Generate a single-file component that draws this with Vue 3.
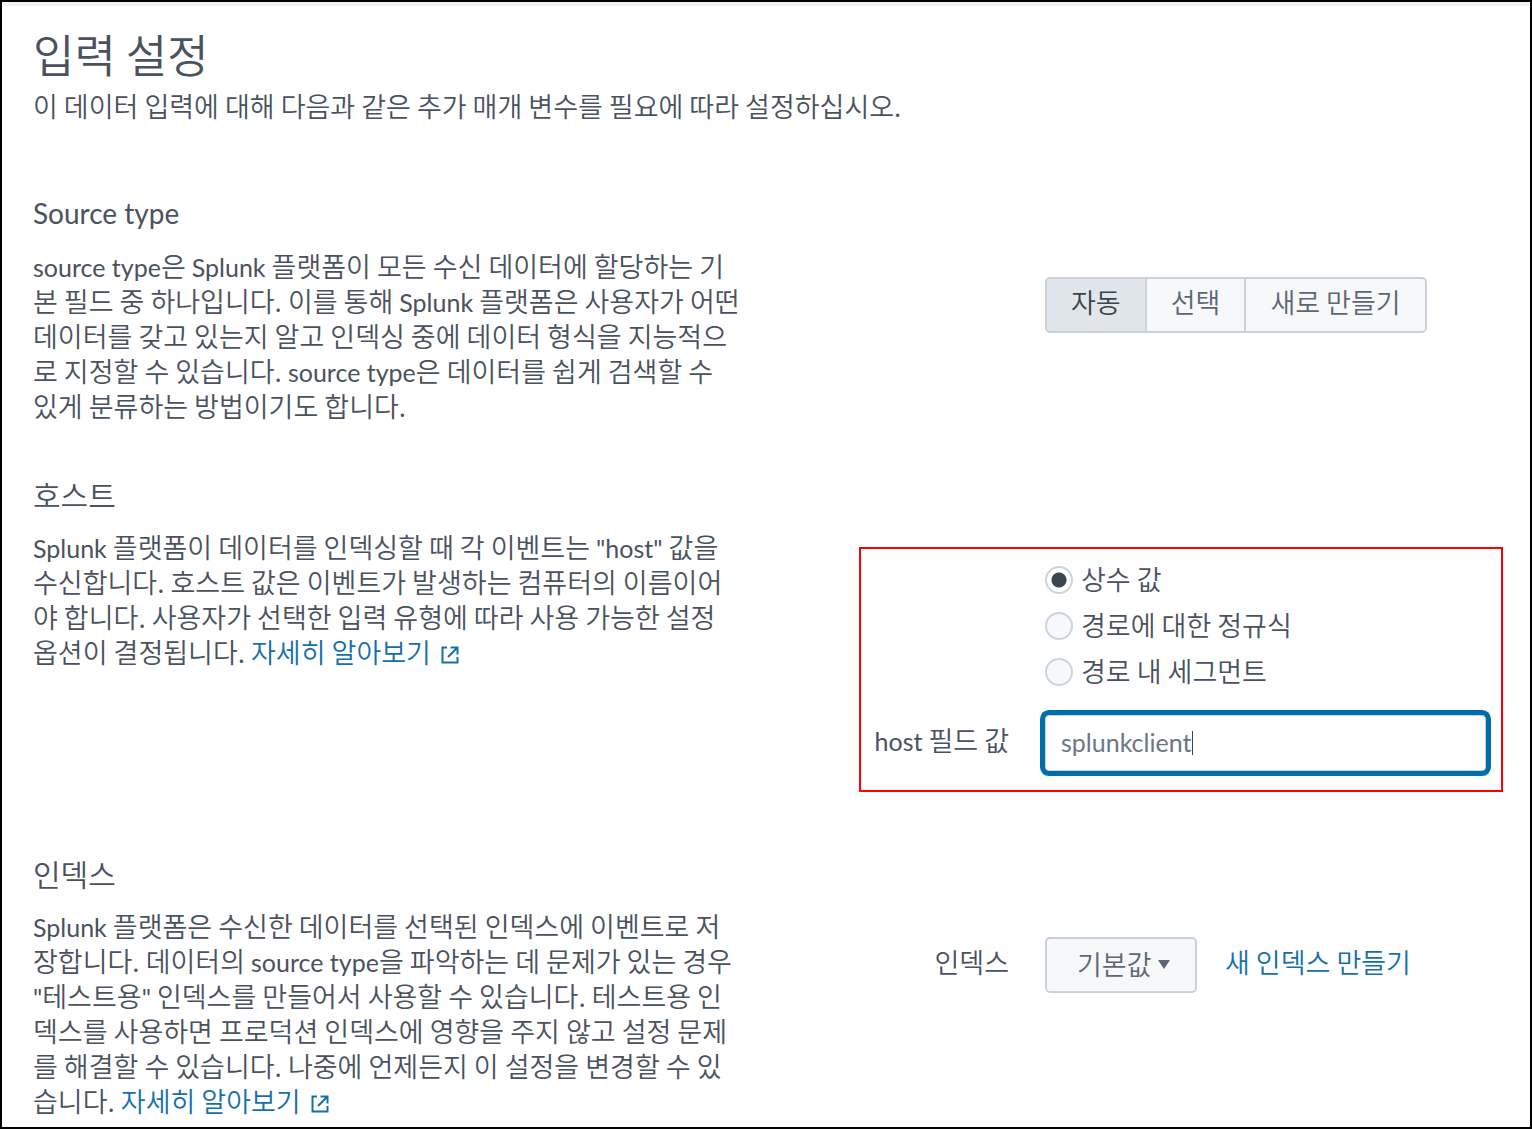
<template>
    <main class="page">
        <header class="page-header">
            <h1>입력 설정</h1>
            <p>이 데이터 입력에 대해 다음과 같은 추가 매개 변수를 필요에 따라 설정하십시오.</p>
        </header>

        <section class="setting">
            <h2 lang="en">Source type</h2>
            <p class="description">
                <span lang="en">source type</span>은 <span lang="en">Splunk</span> 플랫폼이 모든 수신 데이터에 할당하는 기<br />본 필드 중 하나입니다. 이를 통해 <span lang="en">Splunk</span> 플랫폼은 사용자가 어떤<br />데이터를 갖고 있는지 알고 인덱싱 중에 데이터 형식을 지능적으<br />로 지정할 수 있습니다. <span lang="en">source type</span>은 데이터를 쉽게 검색할 수<br />있게 분류하는 방법이기도 합니다.
            </p>
            <div class="controls">
                <div class="field">
                    <div class="button-group">
                        <button
                            v-for="mode in modes"
                            :key="mode"
                            type="button"
                            :class="{ active: mode === selectedMode }"
                            @click="selectedMode = mode"
                        >{{ mode }}</button>
                    </div>
                </div>
            </div>
        </section>

        <section class="setting">
            <h2>호스트</h2>
            <p class="description">
                <span lang="en">Splunk</span> 플랫폼이 데이터를 인덱싱할 때 각 이벤트는 <span lang="en">"host"</span> 값을<br />수신합니다. 호스트 값은 이벤트가 발생하는 컴퓨터의 이름이어<br />야 합니다. 사용자가 선택한 입력 유형에 따라 사용 가능한 설정<br />옵션이 결정됩니다. <a href="#">자세히 알아보기 <svg class="external" viewBox="0 0 18 18"><path d="M6 1.500H1.500v15h15V11M9.500 1.500h7v7M16 2L7 11" /></svg></a>
            </p>
            <div class="controls highlighted">
                <div class="field">
                    <div class="radios">
                        <label v-for="option in hostOptions" :key="option.value">
                            <input v-model="hostType" type="radio" name="host-type" :value="option.value" />
                            <span>{{ option.label }}</span>
                        </label>
                    </div>
                </div>
                <div class="field host-field">
                    <label class="field-label" for="host-value"><span lang="en">host</span> 필드 값</label>
                    <div class="text-box">
                        <input id="host-value" v-model="hostValue" type="text" />
                        <span class="caret"></span>
                    </div>
                </div>
            </div>
        </section>

        <section class="setting">
            <h2>인덱스</h2>
            <p class="description">
                <span lang="en">Splunk</span> 플랫폼은 수신한 데이터를 선택된 인덱스에 이벤트로 저<br />장합니다. 데이터의 <span lang="en">source type</span>을 파악하는 데 문제가 있는 경우<br /><span lang="en">"</span>테스트용<span lang="en">"</span> 인덱스를 만들어서 사용할 수 있습니다. 테스트용 인<br />덱스를 사용하면 프로덕션 인덱스에 영향을 주지 않고 설정 문제<br />를 해결할 수 있습니다. 나중에 언제든지 이 설정을 변경할 수 있<br />습니다. <a href="#">자세히 알아보기 <svg class="external" viewBox="0 0 18 18"><path d="M6 1.500H1.500v15h15V11M9.500 1.500h7v7M16 2L7 11" /></svg></a>
            </p>
            <div class="controls">
                <div class="field">
                    <label class="field-label" for="index">인덱스</label>
                    <div class="index-row">
                        <div class="select-box">
                            <select id="index" v-model="index">
                                <option value="default">기본값</option>
                            </select>
                            <svg class="arrow" viewBox="0 0 12 9"><path d="M0 0h12L6 9z" /></svg>
                        </div>
                        <a href="#">새 인덱스 만들기</a>
                    </div>
                </div>
            </div>
        </section>
    </main>
</template>

<script setup>
import { ref } from 'vue';

const modes = ['자동', '선택', '새로 만들기'];
const hostOptions = [
    { value: 'constant', label: '상수 값' },
    { value: 'regex', label: '경로에 대한 정규식' },
    { value: 'segment', label: '경로 내 세그먼트' }
];

const selectedMode = ref('자동');
const hostType = ref('constant');
const hostValue = ref('splunkclient');
const index = ref('default');
</script>

<style>
body { margin: 0; background: #fff; }
</style>

<style scoped>
* { box-sizing: border-box; }
.page { min-height: 100vh; padding: 22px 27px 4px 31px; border: 2px solid #000; box-shadow: inset 0 4px #eef3f3; color: #4a525e; font-family: "Noto Sans CJK KR", sans-serif; font-size: 27px; line-height: 35px; font-weight: 350; }
h1, h2, p { margin: 0; font-weight: inherit; }
h1 { font-size: 45px; line-height: 60px; margin-bottom: 4px; }
.page-header { margin-bottom: 72px; }
h2 { grid-column: 1 / -1; font-size: 30px; line-height: 36px; margin-bottom: 17px; }
h2[lang="en"] { font-family: Lato, sans-serif; font-size: 28px; font-weight: 400; }
/* latin words run smaller than the hangul around them */
span[lang="en"] { font-family: Lato, sans-serif; font-size: 25px; line-height: 1; font-weight: 400; }
a { color: #1670a8; text-decoration: none; }
.setting { display: grid; grid-template-columns: 59fr 46fr; margin-bottom: 53px; }
.setting:last-child { margin-bottom: 0; }
.description { white-space: nowrap; }
.external { width: 18px; height: 18px; margin-left: 4px; vertical-align: -1px; fill: none; stroke: currentColor; stroke-width: 2; }
.controls { padding: 29px 18px 0 2px; }
.controls.highlighted { margin: 18px 0 10px; padding: 8px 15px 19px 0; border: 2px solid #f00; }
.field { display: grid; grid-template-columns: 148px 1fr; column-gap: 36px; align-items: center; }
.field > :only-child { grid-column: 2; }
.field-label { padding-bottom: 8px; text-align: right; white-space: nowrap; }
.button-group { display: flex; }
.button-group button { height: 56px; padding: 0 24px 8px; margin-left: -2px; border: 2px solid #c9d2da; background: #f7f8fa; color: #5c6773; font: inherit; white-space: nowrap; }
.button-group button:first-child { margin-left: 0; border-radius: 5px 0 0 5px; }
.button-group button:last-child { border-radius: 0 5px 5px 0; }
.button-group button.active { background: #e1e6eb; color: #3c444d; }
.radios label { display: flex; align-items: center; gap: 8px; height: 46px; }
.radios label span { padding-bottom: 4px; }
.radios input { appearance: none; width: 28px; height: 28px; margin: 0; border: 2px solid #cdd4db; border-radius: 50%; background: #f7f8fa; }
.radios input:checked { background: radial-gradient(circle, #3c444d 7px, #fff 8px); }
.host-field { margin-top: 20px; }
.text-box { position: relative; }
.text-box input { display: block; width: 100%; height: 56px; padding: 0 15px 2px; border: 1px solid #c9d2da; border-radius: 4px; outline: none; box-shadow: 0 0 0 5px #006eaa; background: #fff; color: #6b7785; font-family: Lato, sans-serif; font-size: 25px; }
.caret { position: absolute; top: 16px; left: 147px; width: 1px; height: 24px; background: #3c444d; }
.index-row { display: flex; align-items: center; gap: 28px; white-space: nowrap; }
.index-row a { padding-bottom: 8px; }
.select-box { position: relative; }
.select-box select { appearance: none; display: block; width: 152px; height: 56px; padding: 0 30px 4px; border: 2px solid #c9d2da; border-radius: 5px; background: #f7f8fa; color: #5c6773; font: inherit; }
.arrow { position: absolute; top: 23px; right: 27px; width: 12px; height: 9px; fill: #5c6773; pointer-events: none; }
</style>
